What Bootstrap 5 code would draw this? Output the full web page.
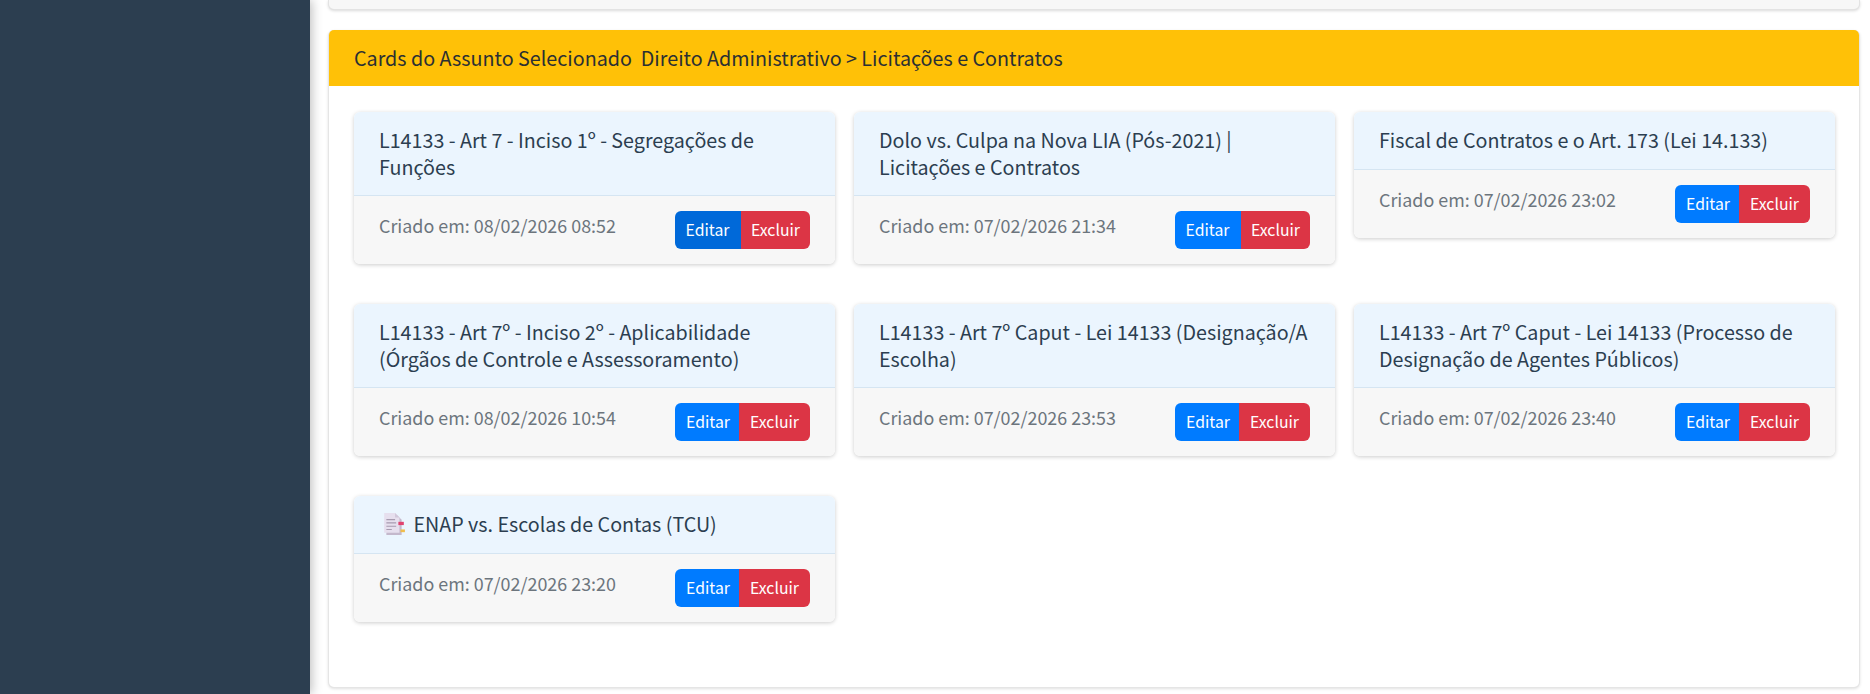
<!DOCTYPE html>
<html lang="pt-BR">
<head>
<meta charset="utf-8">
<title>Cards do Assunto</title>
<link href="https://cdn.jsdelivr.net/npm/bootstrap@5.3.0/dist/css/bootstrap.min.css" rel="stylesheet">
<style>
html,body{height:100%;overflow:hidden}
body{font-family:"Noto Sans CJK SC","Noto Sans",sans-serif;background:#fff;color:#2c3e50}
.side-panel{width:310px;flex:none;background:#2c3e50;box-shadow:2px 0 10px rgba(0,0,0,.25);z-index:2}
.main-area{flex:1;min-width:0;padding:0 10px 0 18px}
.top-stub{height:10px;background:#f7f7f7;border:1px solid rgba(0,0,0,.08);border-top:0;border-radius:0 0 6px 6px;box-shadow:0 1px 3px rgba(0,0,0,.15);margin-bottom:20px}
.topic-card{border:1px solid rgba(0,0,0,.1);border-top:0;border-radius:6px;box-shadow:0 1px 3px rgba(0,0,0,.12);height:658px}
.topic-head{background:#ffc107;border:0;color:#2b2f33;font-size:19.73px;line-height:27px;padding:14px 25px 15px;border-radius:5px 5px 0 0!important;height:56px}
.topic-body{padding:26px 24px 25px 25px}
.grid-cards{--bs-gutter-x:19px;--bs-gutter-y:0}
.note-wrap{margin-bottom:39.8px}
.note-card{border:0;border-radius:6px;box-shadow:0 1px 4px rgba(0,0,0,.2);overflow:hidden}
.note-head{background:#ebf5fe;border:0;border-bottom:1px solid #d5e5f2;border-radius:0!important;padding:15px 25px;font-size:19.7px;line-height:26.6px;color:#2c3e50;font-weight:400}
.note-foot{background:#f7f7f7;border:0;padding:15px 25px}
.note-date{font-size:17.9px;line-height:24px;color:#6c757d;padding-top:2px}
.act-btn{font-size:15.8px;line-height:22px;padding:8px 0;color:#fff;border:0;height:38px}
.act-edit{background:#007bff;width:65px;padding-left:1px}
.act-del{background:#dc3545;width:71px}
.act-edit.wide{width:67px;padding:8px 2px 8px 0}
.act-del.wide{width:69px;padding-left:0}
.act-edit.hot{background:#0069d9}
.doc-icon{width:24px;height:24px;vertical-align:-4px;margin:0 3px 0 3px}
</style>
</head>
<body>
<div class="d-flex h-100">
  <aside class="side-panel"></aside>
  <main class="main-area">
    <div class="top-stub"></div>
    <section class="card topic-card">
      <div class="card-header topic-head">Cards do Assunto Selecionado&nbsp; Direito Administrativo &gt; Licitações e Contratos</div>
      <div class="card-body topic-body">
        <div class="row grid-cards align-items-start">
          <div class="col-4 note-wrap"><div class="card note-card">
            <h5 class="card-header note-head m-0">L14133 - Art 7 - Inciso 1º - Segregações de Funções</h5>
            <div class="card-footer note-foot d-flex justify-content-between align-items-start">
              <span class="note-date">Criado em: 08/02/2026 08:52</span>
              <div class="btn-group"><button class="btn act-btn act-edit wide hot">Editar</button><button class="btn act-btn act-del wide">Excluir</button></div>
            </div></div></div>
          <div class="col-4 note-wrap"><div class="card note-card">
            <h5 class="card-header note-head m-0">Dolo vs. Culpa na Nova LIA (Pós-2021) | Licitações e Contratos</h5>
            <div class="card-footer note-foot d-flex justify-content-between align-items-start">
              <span class="note-date">Criado em: 07/02/2026 21:34</span>
              <div class="btn-group"><button class="btn act-btn act-edit wide">Editar</button><button class="btn act-btn act-del wide">Excluir</button></div>
            </div></div></div>
          <div class="col-4 note-wrap"><div class="card note-card">
            <h5 class="card-header note-head m-0">Fiscal de Contratos e o Art. 173 (Lei 14.133)</h5>
            <div class="card-footer note-foot d-flex justify-content-between align-items-start">
              <span class="note-date">Criado em: 07/02/2026 23:02</span>
              <div class="btn-group"><button class="btn act-btn act-edit">Editar</button><button class="btn act-btn act-del">Excluir</button></div>
            </div></div></div>
          <div class="col-4 note-wrap"><div class="card note-card">
            <h5 class="card-header note-head m-0">L14133 - Art 7º - Inciso 2º - Aplicabilidade (Órgãos de Controle e Assessoramento)</h5>
            <div class="card-footer note-foot d-flex justify-content-between align-items-start">
              <span class="note-date">Criado em: 08/02/2026 10:54</span>
              <div class="btn-group"><button class="btn act-btn act-edit">Editar</button><button class="btn act-btn act-del">Excluir</button></div>
            </div></div></div>
          <div class="col-4 note-wrap"><div class="card note-card">
            <h5 class="card-header note-head m-0">L14133 - Art 7º Caput - Lei 14133 (Designação/A Escolha)</h5>
            <div class="card-footer note-foot d-flex justify-content-between align-items-start">
              <span class="note-date">Criado em: 07/02/2026 23:53</span>
              <div class="btn-group"><button class="btn act-btn act-edit">Editar</button><button class="btn act-btn act-del">Excluir</button></div>
            </div></div></div>
          <div class="col-4 note-wrap"><div class="card note-card">
            <h5 class="card-header note-head m-0">L14133 - Art 7º Caput - Lei 14133 (Processo de Designação de Agentes Públicos)</h5>
            <div class="card-footer note-foot d-flex justify-content-between align-items-start">
              <span class="note-date">Criado em: 07/02/2026 23:40</span>
              <div class="btn-group"><button class="btn act-btn act-edit">Editar</button><button class="btn act-btn act-del">Excluir</button></div>
            </div></div></div>
          <div class="col-4 note-wrap"><div class="card note-card">
            <h5 class="card-header note-head m-0"><svg class="doc-icon" viewBox="0 0 22 22" aria-hidden="true"><path d="M4 3h10l4 4v14H4z" fill="#c4b8cc"/><path d="M2 1h10l4 4v14H2z" fill="#e6dfee"/><path d="M12 1l4 4h-4z" fill="#d1c7da"/><path d="M4 7h8M4 10h9M4 13h9M4 16h5" stroke="#a79bb0" stroke-width="1"/><rect x="15" y="9" width="5" height="3" fill="#e0436f"/><rect x="17" y="16" width="4" height="2.5" fill="#f0bd4c"/></svg> ENAP vs. Escolas de Contas (TCU)</h5>
            <div class="card-footer note-foot d-flex justify-content-between align-items-start">
              <span class="note-date">Criado em: 07/02/2026 23:20</span>
              <div class="btn-group"><button class="btn act-btn act-edit">Editar</button><button class="btn act-btn act-del">Excluir</button></div>
            </div></div></div>
        </div>
      </div>
    </section>
  </main>
</div>
<script src="https://cdn.jsdelivr.net/npm/bootstrap@5.3.0/dist/js/bootstrap.bundle.min.js"></script>
</body>
</html>
